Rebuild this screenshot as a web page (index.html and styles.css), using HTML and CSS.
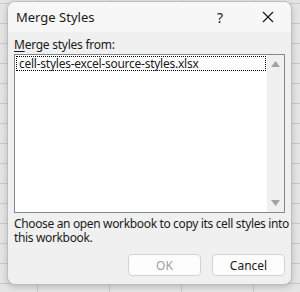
FILE: index.html
```html
<!DOCTYPE html>
<html>
<head>
<meta charset="utf-8">
<link rel="stylesheet" href="styles.css">
</head>
<body>
<div class="dialog">
  <div class="titlebar">
    <span class="title">Merge Styles</span>
    <span class="help">?</span>
    <span class="close">
      <svg width="12" height="12" viewBox="0 0 12 12"><path d="M1 1 L11 11 M11 1 L1 11" stroke="#1a1a1a" stroke-width="1.2" fill="none"/></svg>
    </span>
  </div>
  <div class="content">
    <div class="label"><u>M</u>erge styles from:</div>
    <div class="listbox">
      <div class="items">
        <div class="item">cell-styles-excel-source-styles.xlsx</div>
      </div>
      <div class="scrollbar">
        <svg class="arrow" width="9" height="6" viewBox="0 0 9 6"><path d="M0 6 L4.5 0 L9 6 Z" fill="#a3a3a3"/></svg>
        <svg class="arrow" width="9" height="6" viewBox="0 0 9 6"><path d="M0 0 L9 0 L4.5 6 Z" fill="#a3a3a3"/></svg>
      </div>
    </div>
    <p class="desc">Choose an open workbook to copy its cell styles into this workbook.</p>
    <div class="buttons">
      <button class="btn" disabled>OK</button>
      <button class="btn">Cancel</button>
    </div>
  </div>
</div>
</body>
</html>
```
FILE: styles.css
```css
html, body {
  margin: 0;
  padding: 0;
}
body {
  width: 300px;
  height: 292px;
  overflow: hidden;
  background-color: #e4e4e4;
  background-image:
    repeating-linear-gradient(to bottom, transparent 0, transparent 3px, #c9c9c9 3px, #c9c9c9 4px, transparent 4px, transparent 20px),
    repeating-linear-gradient(to right, transparent 0, transparent 37px, #c9c9c9 37px, #c9c9c9 38px, transparent 38px, transparent 72px);
  font-family: "Noto Sans", "Open Sans", sans-serif;
  font-size: 12px;
  letter-spacing: -0.25px;
  color: #1a1a1a;
}
.dialog {
  margin-left: 7px;
  margin-top: 1px;
  width: 283px;
  height: 282px;
  background: #f0f0f0;
  border: 1px solid #bdbdbd;
  border-radius: 8px;
  box-shadow: 0 2px 6px rgba(0,0,0,0.18);
  display: flex;
  flex-direction: column;
  overflow: hidden;
}
.titlebar {
  height: 30px;
  background: #f7f7f7;
  display: flex;
  align-items: center;
  padding-left: 8px;
}
.title {
  flex: 1;
  font-size: 13px;
  letter-spacing: 0;
  padding-bottom: 1px;
}
.help {
  width: 46px;
  text-align: center;
  font-size: 14px;
  padding-left: 4px;
}
.close {
  width: 46px;
  display: flex;
  justify-content: center;
  padding-left: 2px;
}
.content {
  padding: 4px 6px 0 6px;
  display: flex;
  flex-direction: column;
}
.label {
  height: 18px;
  line-height: 17px;
}
.label u {
  text-underline-offset: 2px;
}
.listbox {
  height: 157px;
  border: 1px solid #828790;
  background: #ffffff;
  display: flex;
}
.items {
  flex: 1;
  padding: 1px 1px 0 1px;
}
.item {
  height: 13px;
  line-height: 13px;
  border: 1px dotted #000;
  padding-left: 2px;
  white-space: nowrap;
}
.scrollbar {
  width: 17px;
  background: #f0f0f0;
  display: flex;
  flex-direction: column;
  justify-content: space-between;
  align-items: center;
  padding: 6px 0 6px 0;
}
.desc {
  margin: 4px -6px 0 0;
  line-height: 14px;
  letter-spacing: -0.35px;
}
.buttons {
  display: flex;
  justify-content: flex-end;
  gap: 11px;
  margin-top: 9px;
}
.btn {
  width: 73px;
  height: 22px;
  background: #fdfdfd;
  border: 1px solid #d3d3d3;
  border-radius: 4px;
  font-family: inherit;
  font-size: 12px;
  color: #1a1a1a;
  padding: 0;
}
.btn:disabled {
  color: #9d9d9d;
}
```
